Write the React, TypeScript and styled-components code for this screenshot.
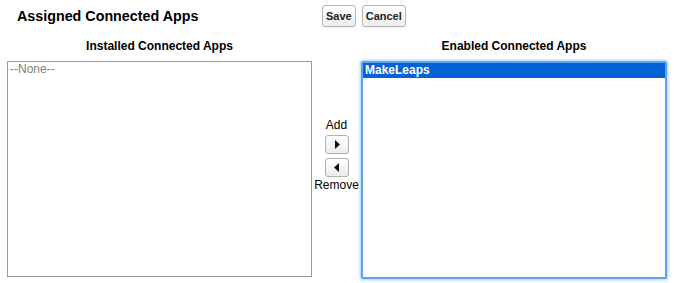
import React from "react";
import styled, { createGlobalStyle } from "styled-components";

const Global = createGlobalStyle`
  html, body { margin: 0; padding: 0; background: #fff; }
  body { font-family: "Liberation Sans", Arial, sans-serif; color: #000; }
`;

const Page = styled.div`
  width: 674px;
  height: 283px;
  overflow: hidden;
`;

const Header = styled.div`
  display: flex;
  align-items: center;
  height: 32px;
  padding-left: 17px;
`;

const Title = styled.h2`
  margin: 0;
  font-size: 14.3px;
  font-weight: bold;
  width: 305px;
`;

const ButtonRow = styled.div`
  display: flex;
  gap: 6px;
`;

const Button = styled.button`
  margin: 0;
  font-family: "Liberation Sans", Arial, sans-serif;
  font-size: 11px;
  font-weight: bold;
  color: #222;
  height: 22px;
  padding: 0 3px;
  border: 1px solid #b5b5b5;
  border-radius: 3px;
  background: linear-gradient(#ffffff, #ececec);
  box-shadow: 0 1px 1px rgba(0,0,0,0.08);
`;

const Columns = styled.div`
  display: flex;
  align-items: flex-start;
  padding-left: 7px;
  margin-top: 6px;
`;

const Column = styled.div<{ $w: number }>`
  width: ${p => p.$w}px;
  display: flex;
  flex-direction: column;
`;

const ColHead = styled.div`
  font-size: 12px;
  font-weight: bold;
  text-align: center;
  height: 23px;
  line-height: 16px;
`;

const ListBox = styled.div<{ $focus?: boolean }>`
  height: 214px;
  background: #fff;
  border: 1px solid #9a9a9a;
  ${p => p.$focus && `
    border: 2px solid #5ea3f0;
    box-shadow: 0 0 3px 1px #a9cdf6;
    border-radius: 2px;
  `}
  font-size: 12px;
  line-height: 14px;
`;

const Option = styled.div<{ $selected?: boolean; $muted?: boolean }>`
  padding: 0 2px 1px;
  color: ${p => (p.$selected ? "#fff" : p.$muted ? "#808080" : "#000")};
  background: ${p => (p.$selected ? "#0461d8" : "transparent")};
  font-weight: ${p => (p.$selected ? "bold" : "normal")};
`;

const Middle = styled.div`
  width: 49px;
  display: flex;
  flex-direction: column;
  align-items: center;
  padding-top: 80px;
  font-size: 12px;
`;

const Label = styled.div`
  line-height: 14px;
`;

const ArrowButton = styled.button`
  width: 24px;
  height: 19px;
  margin: 3px 0 1px;
  padding: 0;
  display: flex;
  align-items: center;
  justify-content: center;
  border: 1px solid #b0b0b0;
  border-radius: 3px;
  background: linear-gradient(#ffffff, #ececec);
`;

const Tri = ({ dir }: { dir: "left" | "right" }) => (
  <svg width="6" height="9" viewBox="0 0 6 9">
    {dir === "right" ? (
      <polygon points="1,0 6,4.5 1,9" fill="#111" />
    ) : (
      <polygon points="5,0 0,4.5 5,9" fill="#111" />
    )}
  </svg>
);

export default function App() {
  return (
    <Page>
      <Global />
      <Header>
        <Title>Assigned Connected Apps</Title>
        <ButtonRow>
          <Button>Save</Button>
          <Button>Cancel</Button>
        </ButtonRow>
      </Header>
      <Columns>
        <Column $w={305}>
          <ColHead>Installed Connected Apps</ColHead>
          <ListBox>
            <Option $muted>--None--</Option>
          </ListBox>
        </Column>
        <Middle>
          <Label>Add</Label>
          <ArrowButton aria-label="Add"><Tri dir="right" /></ArrowButton>
          <ArrowButton aria-label="Remove"><Tri dir="left" /></ArrowButton>
          <Label>Remove</Label>
        </Middle>
        <Column $w={306}>
          <ColHead>Enabled Connected Apps</ColHead>
          <ListBox $focus>
            <Option $selected>MakeLeaps</Option>
          </ListBox>
        </Column>
      </Columns>
    </Page>
  );
}
